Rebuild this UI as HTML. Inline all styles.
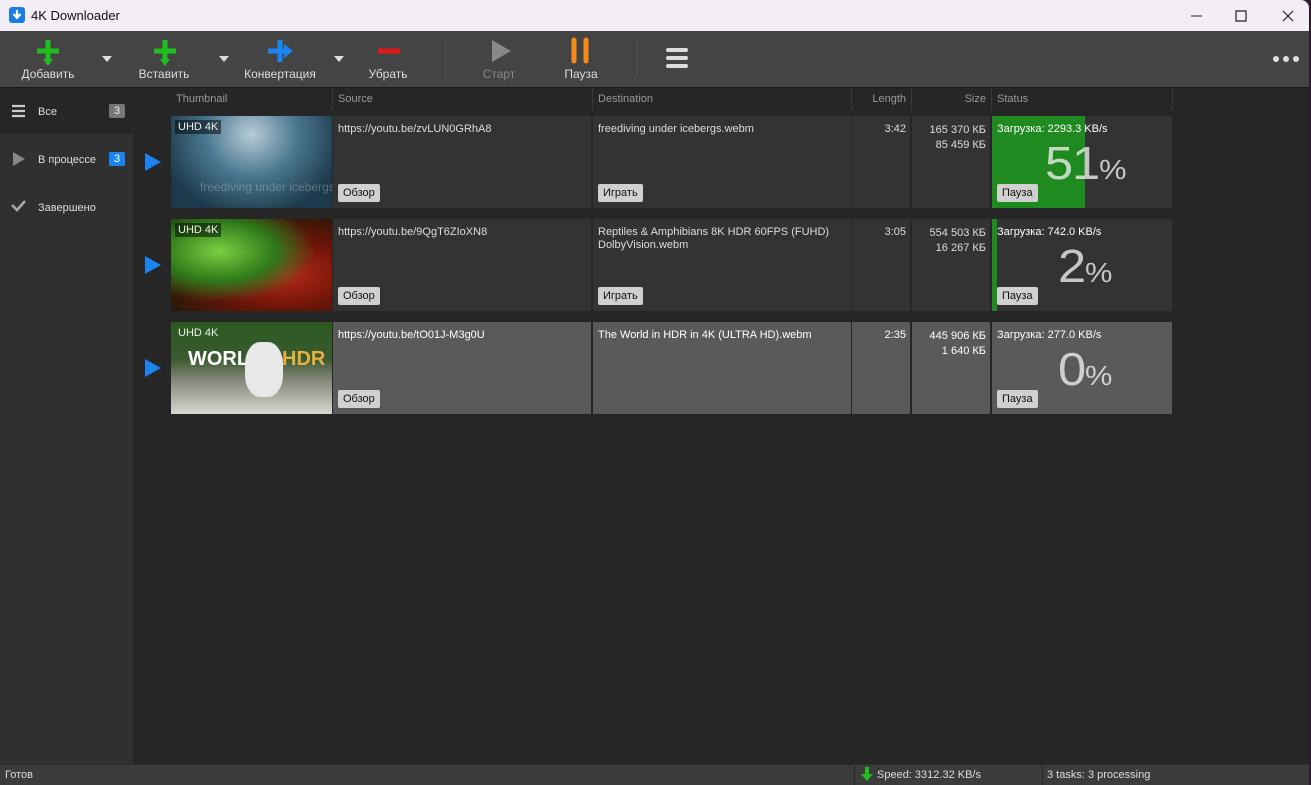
<!DOCTYPE html><html><head><meta charset="utf-8"><style>
*{box-sizing:border-box;margin:0;padding:0}
body{width:1311px;height:785px;overflow:hidden;background:#2a1a2a;font-family:"Liberation Sans",sans-serif;font-size:11px;color:#ddd;position:relative}
.a{position:absolute}
#win{left:0;top:0;width:1309px;height:785px;background:#262626;overflow:hidden;border-radius:0 8px 0 0}
.tb{color:#ddd;font-size:12px;text-align:center}
.btn{background:#d0d0d0;color:#111;border-radius:2px;font-size:11px;padding:3px 5px;position:absolute}
.cell{position:absolute;background:#333}
.r3 .cell{background:#5a5a5a}
.hdr{position:absolute;top:88px;height:22px;color:#999;font-size:11px;line-height:22px;border-right:1px solid #3a3a3a;padding:0 5px}
.pct{position:absolute;font-size:46px;font-weight:normal;color:rgba(235,235,235,.8);font-family:"Liberation Sans",sans-serif;letter-spacing:-1px;transform:scaleX(1.1);transform-origin:left}
.pct span{font-size:28px}
</style></head><body>
<div id="win" class="a">
<div class="a" style="left:0;top:0;width:1309px;height:31px;background:#f3edf5;color:#111;font-size:13px">
 <div class="a" style="left:9px;top:7px;width:16px;height:16px;background:#1a7de6;border-radius:3px"><svg width="16" height="16"><path d="M8 3v7M4.5 7l3.5 4 3.5-4" stroke="#fff" stroke-width="2.2" fill="none"/></svg></div>
 <div class="a" style="left:31px;top:8px">4K Downloader</div>
 <svg class="a" style="left:1185px;top:8px" width="120" height="16"><path d="M6 8h11" stroke="#222"/><path d="M51 3h10v10h-10z" stroke="#222" fill="none" stroke-width="1.2"/><path d="M98 3l10 10M108 3l-10 10" stroke="#222" stroke-width="1.2"/></svg>
</div>
<div class="a" style="left:0;top:31px;width:1309px;height:56px;background:#444">
 <svg class="a" style="left:0;top:0" width="1309" height="56">
  <g stroke="#1fbf1f" stroke-width="5"><path d="M48 9v22M37 20h22"/><path d="M165 9v22M154 20h22"/></g>
  <path d="M43 28l5 7 5-7z M160 28l5 7 5-7z" fill="#1fbf1f"/>
  <path d="M102 25h10l-5 6z M219 25h10l-5 6z M334 25h10l-5 6z" fill="#ddd"/>
  <g stroke="#1a84f0" stroke-width="5"><path d="M280 9v22M268 20h16"/></g><path d="M284 13l9 7-9 7z" fill="#1a84f0"/>
  <path d="M378 20h22" stroke="#e01818" stroke-width="5"/>
  <path d="M492 9l19 11-19 11z" fill="#888"/>
  <path d="M574 9v21M586 9v21" stroke="#f58a1a" stroke-width="5" stroke-linecap="round"/>
  <path d="M668 19h18M668 27h18M668 35h18" stroke="#ddd" stroke-width="4" stroke-linecap="round"/>
  <path d="M446 9v37M637 9v37" stroke="#555"/>
  <circle cx="1276" cy="28" r="3" fill="#ddd"/><circle cx="1286" cy="28" r="3" fill="#ddd"/><circle cx="1296" cy="28" r="3" fill="#ddd"/>
 </svg>
 <div class="a tb" style="left:18px;top:36px;width:60px">Добавить</div>
 <div class="a tb" style="left:134px;top:36px;width:60px">Вставить</div>
 <div class="a tb" style="left:240px;top:36px;width:80px">Конвертация</div>
 <div class="a tb" style="left:360px;top:36px;width:56px">Убрать</div>
 <div class="a tb" style="left:474px;top:36px;width:50px;color:#888">Старт</div>
 <div class="a tb" style="left:556px;top:36px;width:50px">Пауза</div>
</div>
<div class="a" style="left:0;top:87px;width:1309px;height:1px;background:#1a1a1a"></div>
<div class="a" style="left:0;top:88px;width:133px;height:676px;background:#303030"></div>
<div class="a" style="left:0;top:88px;width:133px;height:46px;background:#262626"></div>
<svg class="a" style="left:10px;top:104px" width="20" height="120"><path d="M2 2h13M2 7h13M2 12h13" stroke="#ccc" stroke-width="2.2"/><path d="M3 48l12 7-12 7z" fill="#888"/><path d="M2 101l5 5 8-9" stroke="#aaa" stroke-width="2.5" fill="none"/></svg>
<div class="a" style="left:38px;top:106px">Все</div>
<div class="a" style="left:109px;top:104px;width:16px;height:14px;background:#777;border-radius:2px;text-align:center;line-height:14px;color:#eee">3</div>
<div class="a" style="left:38px;top:154px">В процессе</div>
<div class="a" style="left:109px;top:152px;width:16px;height:14px;background:#1a84f0;border-radius:2px;text-align:center;line-height:14px;color:#fff">3</div>
<div class="a" style="left:38px;top:202px">Завершено</div>
<div class="hdr" style="left:171px;width:162px">Thumbnail</div>
<div class="hdr" style="left:333px;width:260px">Source</div>
<div class="hdr" style="left:593px;width:259px">Destination</div>
<div class="hdr" style="left:852px;width:60px;text-align:right">Length</div>
<div class="hdr" style="left:912px;width:80px;text-align:right">Size</div>
<div class="hdr" style="left:992px;width:181px">Status</div>

<div>
<svg class="a" style="left:144px;top:153px" width="18" height="18"><path d="M1 0l16 9-16 9z" fill="#1a84f0"/></svg>
<div class="cell" style="left:171px;top:116px;width:161px;height:92px;background:radial-gradient(ellipse at 50% 20%,#b8ccd8,#4a7890 40%,#1d3a4c 80%)"></div>
<div class="a" style="left:175px;top:120px;background:rgba(0,0,0,.5);color:#eee;padding:1px 3px">UHD 4K</div>
<div class="a" style="left:200px;top:180px;color:rgba(200,210,220,.35);font-size:12px">freediving under icebergs</div>
<div class="cell" style="left:333px;top:116px;width:258px;height:92px"></div>
<div class="a" style="left:338px;top:123px">https://youtu.be/zvLUN0GRhA8</div>
<div class="btn" style="left:338px;top:184px">Обзор</div>
<div class="cell" style="left:593px;top:116px;width:258px;height:92px"></div>
<div class="a" style="left:598px;top:123px">freediving under icebergs.webm</div>
<div class="btn" style="left:598px;top:184px">Играть</div>
<div class="cell" style="left:852px;top:116px;width:58px;height:92px"></div>
<div class="a" style="left:852px;top:123px;width:54px;text-align:right">3:42</div>
<div class="cell" style="left:912px;top:116px;width:78px;height:92px"></div>
<div class="a" style="left:912px;top:123px;width:74px;text-align:right;line-height:15px">165 370 КБ<br>85 459 КБ</div>
<div class="cell" style="left:992px;top:116px;width:180px;height:92px"></div>
<div class="a" style="left:992px;top:116px;width:93px;height:92px;background:#1f8a1f"></div>
<div class="a" style="left:997px;top:123px;color:#fff">Загрузка: 2293.3 KB/s</div>
<div class="pct" style="left:1045px;top:136px">51<span>%</span></div>
<div class="btn" style="left:997px;top:184px">Пауза</div>
</div>

<div>
<svg class="a" style="left:144px;top:256px" width="18" height="18"><path d="M1 0l16 9-16 9z" fill="#1a84f0"/></svg>
<div class="cell" style="left:171px;top:219px;width:161px;height:92px;background:radial-gradient(ellipse at 30% 35%,#7ad040,#2f7a1a 35%,transparent 60%),radial-gradient(ellipse at 70% 60%,#b82818,#6a1408 45%,#1a1a0a 90%)"></div>
<div class="a" style="left:175px;top:223px;background:rgba(0,0,0,.5);color:#eee;padding:1px 3px">UHD 4K</div>
<div class="cell" style="left:333px;top:219px;width:258px;height:92px"></div>
<div class="a" style="left:338px;top:226px">https://youtu.be/9QgT6ZIoXN8</div>
<div class="btn" style="left:338px;top:287px">Обзор</div>
<div class="cell" style="left:593px;top:219px;width:258px;height:92px"></div>
<div class="a" style="left:598px;top:226px;line-height:13px">Reptiles &amp; Amphibians 8K HDR 60FPS (FUHD)<br>DolbyVision.webm</div>
<div class="btn" style="left:598px;top:287px">Играть</div>
<div class="cell" style="left:852px;top:219px;width:58px;height:92px"></div>
<div class="a" style="left:852px;top:226px;width:54px;text-align:right">3:05</div>
<div class="cell" style="left:912px;top:219px;width:78px;height:92px"></div>
<div class="a" style="left:912px;top:226px;width:74px;text-align:right;line-height:15px">554 503 КБ<br>16 267 КБ</div>
<div class="cell" style="left:992px;top:219px;width:180px;height:92px"></div>
<div class="a" style="left:992px;top:219px;width:5px;height:92px;background:#1f8a1f"></div>
<div class="a" style="left:997px;top:226px;color:#fff">Загрузка: 742.0 KB/s</div>
<div class="pct" style="left:1058px;top:239px">2<span>%</span></div>
<div class="btn" style="left:997px;top:287px">Пауза</div>
</div>

<div class="r3">
<svg class="a" style="left:144px;top:359px" width="18" height="18"><path d="M1 0l16 9-16 9z" fill="#1a84f0"/></svg>
<div class="cell" style="left:171px;top:322px;width:161px;height:92px;background:linear-gradient(180deg,#2a5a20 0%,#3a5a30 40%,#8a8a80 65%,#d8d8d0 100%)"></div>
<div class="a" style="left:175px;top:326px;color:#eee;padding:1px 3px">UHD 4K</div>
<div class="a" style="left:188px;top:348px;color:#fff;font-weight:bold;font-size:20px">WORLD</div>
<div class="a" style="left:282px;top:348px;color:#e8b040;font-weight:bold;font-size:20px">HDR</div>
<div class="a" style="left:245px;top:342px;width:38px;height:55px;background:#e8e8e8;border-radius:40%"></div>
<div class="cell" style="left:333px;top:322px;width:258px;height:92px"></div>
<div class="a" style="left:338px;top:329px;color:#fff">https://youtu.be/tO01J-M3g0U</div>
<div class="btn" style="left:338px;top:390px">Обзор</div>
<div class="cell" style="left:593px;top:322px;width:258px;height:92px"></div>
<div class="a" style="left:598px;top:329px;color:#fff">The World in HDR in 4K (ULTRA HD).webm</div>
<div class="cell" style="left:852px;top:322px;width:58px;height:92px"></div>
<div class="a" style="left:852px;top:329px;width:54px;text-align:right;color:#fff">2:35</div>
<div class="cell" style="left:912px;top:322px;width:78px;height:92px"></div>
<div class="a" style="left:912px;top:329px;width:74px;text-align:right;line-height:15px;color:#fff">445 906 КБ<br>1 640 КБ</div>
<div class="cell" style="left:992px;top:322px;width:180px;height:92px"></div>
<div class="a" style="left:997px;top:329px;color:#fff">Загрузка: 277.0 KB/s</div>
<div class="pct" style="left:1058px;top:342px">0<span>%</span></div>
<div class="btn" style="left:997px;top:390px">Пауза</div>
</div>

<div class="a" style="left:0;top:764px;width:1309px;height:21px;background:#3c3c3c;border-top:1px solid #2a2a2a"></div>
<div class="a" style="left:5px;top:769px">Готов</div>
<div class="a" style="left:854px;top:765px;width:1px;height:20px;background:#2a2a2a"></div>
<svg class="a" style="left:860px;top:766px" width="14" height="16"><path d="M5 1h4v7h4l-6 7-6-7h4z" fill="#1fbf1f"/></svg>
<div class="a" style="left:877px;top:769px">Speed: 3312.32 KB/s</div>
<div class="a" style="left:1042px;top:765px;width:1px;height:20px;background:#2a2a2a"></div>
<div class="a" style="left:1047px;top:769px">3 tasks: 3 processing</div>
</div>
</body></html>
